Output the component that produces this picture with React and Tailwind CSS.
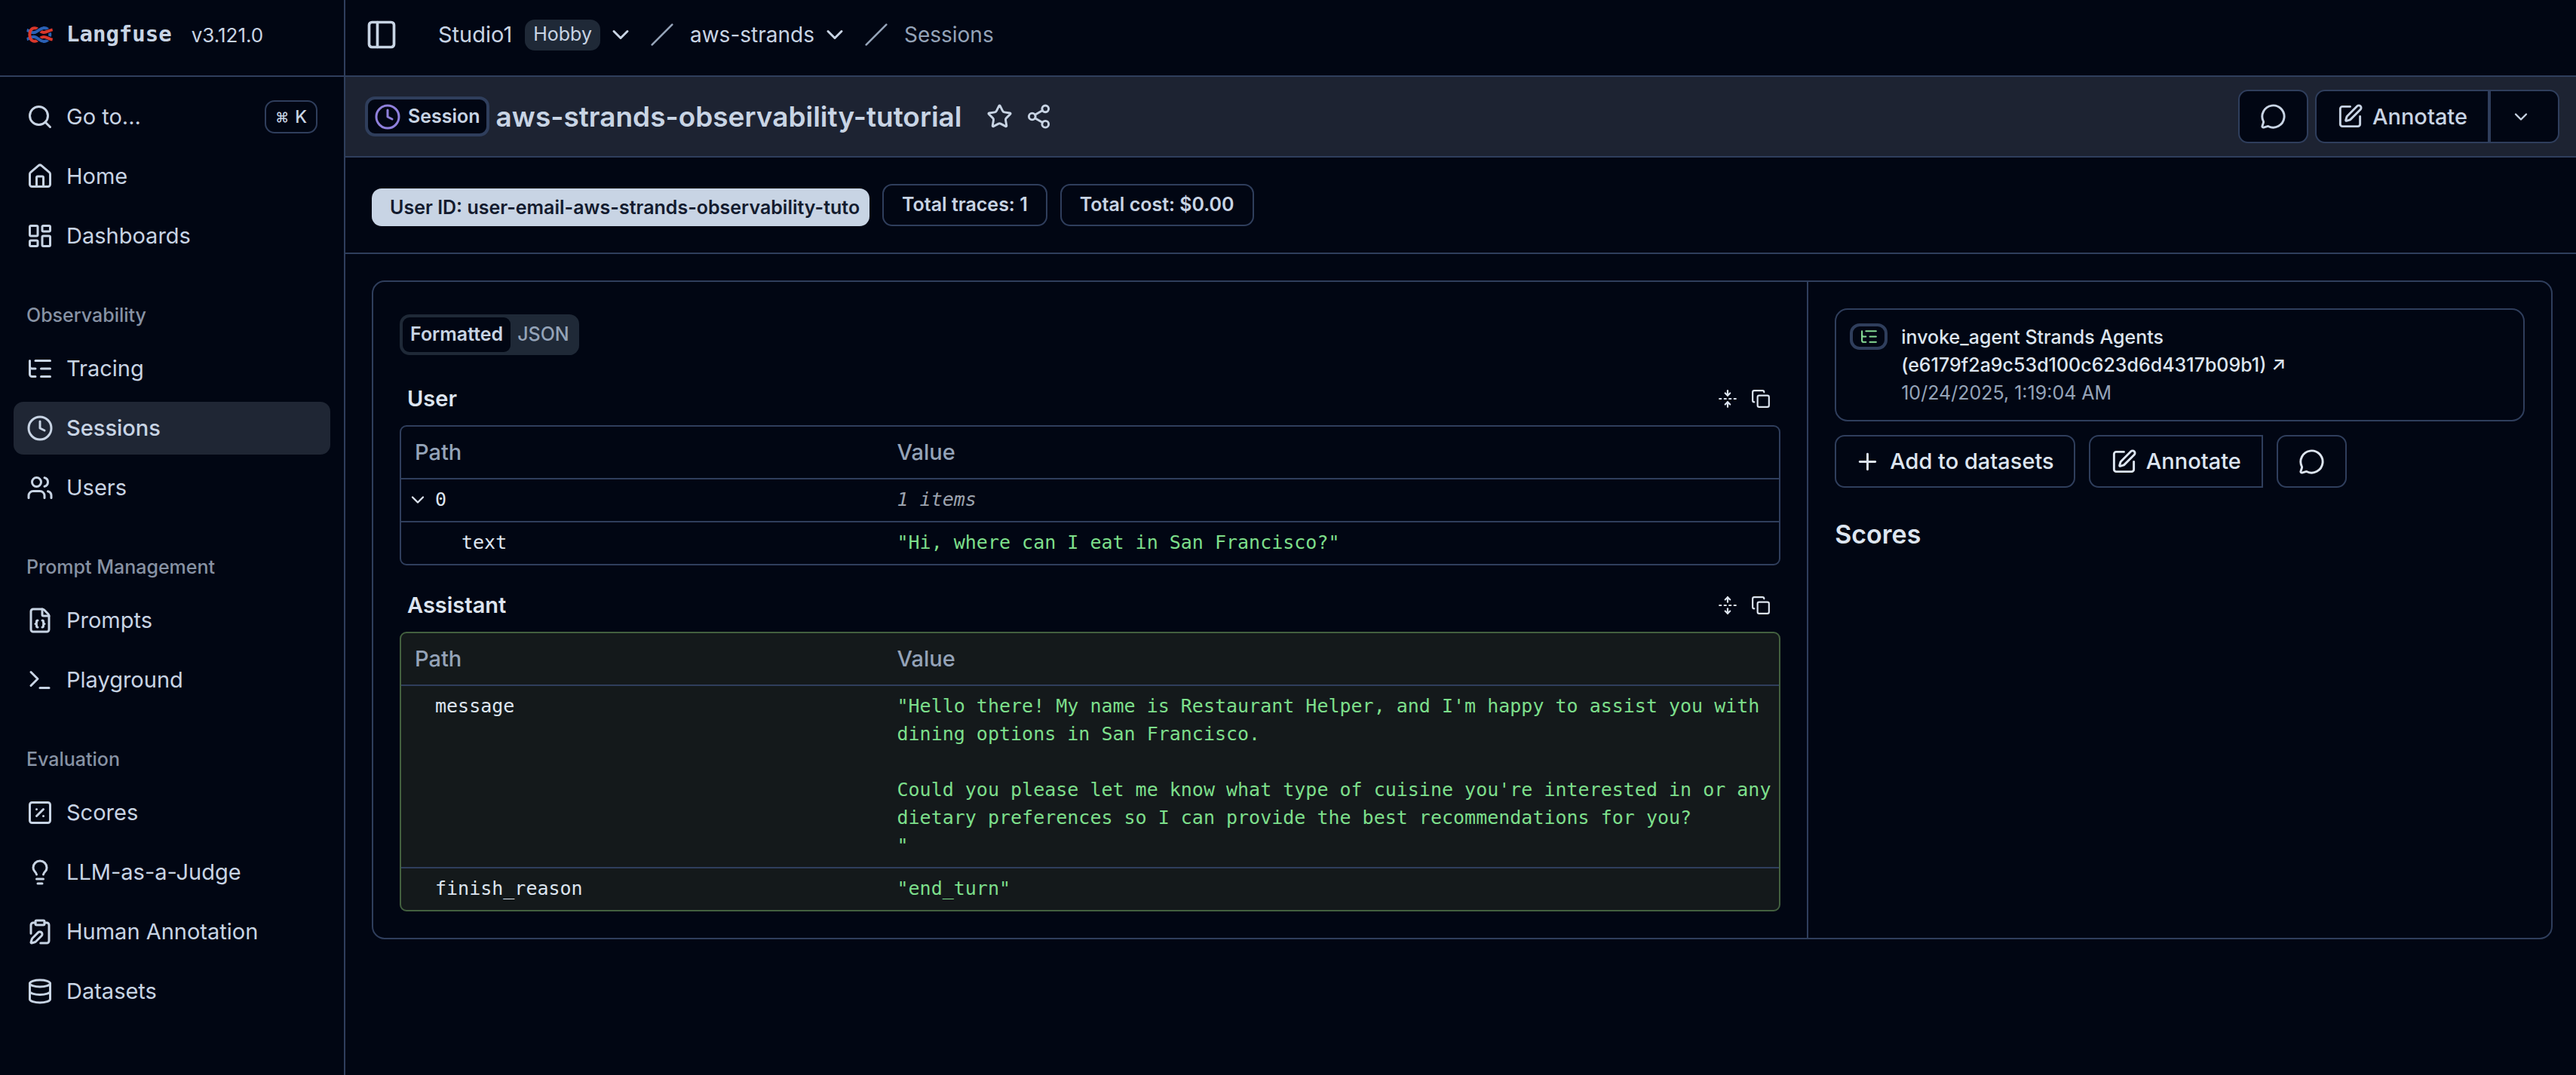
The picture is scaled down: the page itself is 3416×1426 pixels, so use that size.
import {
  Search, House, LayoutDashboard, ListTree, Clock, Users, FileBraces, Terminal, SquarePercent,
  Lightbulb, ClipboardPen, Database, PanelLeft, ChevronDown, Slash, Star, Share2, MessageCircle,
  SquarePen, Plus, FoldVertical, UnfoldVertical, Copy,
} from "lucide-react";

const groups = [
  { items: [[Search, "Go to..."], [House, "Home"], [LayoutDashboard, "Dashboards"]] },
  { label: "Observability", items: [[ListTree, "Tracing"], [Clock, "Sessions"], [Users, "Users"]] },
  { label: "Prompt Management", items: [[FileBraces, "Prompts"], [Terminal, "Playground"]] },
  {
    label: "Evaluation",
    items: [[SquarePercent, "Scores"], [Lightbulb, "LLM-as-a-Judge"], [ClipboardPen, "Human Annotation"], [Database, "Datasets"]],
  },
];

function Logo() {
  return (
    <svg viewBox="15 44 105 72" className="h-6 w-[35px]" fill="none" strokeWidth="12" aria-hidden="true">
      <path stroke="#2a61b5" d="M17 62C28 64 32 72 44 72C64 70 66 53 84 53C100 53 109 66 109 80C109 94 100 107 84 107C66 107 64 90 44 88C32 88 28 96 17 98" />
      <path stroke="#010613" strokeWidth="17" d="M114 62C100 66 95 71 84 71M114 98C100 94 95 89 84 89" />
      <path stroke="#d9372b" d="M119 60C102 64 96 71 84 71C70 71 62 54 48 54C34 54 28 66 28 80C28 94 34 106 48 106C62 106 70 89 84 89C96 89 102 96 119 100" />
      <path stroke="#010613" strokeWidth="17" d="M52 70C64 66 69 54 82 53M52 90C64 94 69 106 82 107" />
      <path stroke="#2a61b5" d="M44 72C64 70 66 53 86 53M44 88C64 90 66 107 86 107" />
    </svg>
  );
}

function Sidebar() {
  return (
    <aside className="flex w-[458px] shrink-0 flex-col border-r-2 border-[#2f3e5c]">
      <div className="flex h-[102px] items-center border-b-2 border-[#2f3e5c] pb-2 pl-[35px]">
        <Logo />
        <span className="ml-[18px] text-[29px] font-bold [font-family:'DejaVu_Sans_Mono',monospace]">Langfuse</span>
        <span className="ml-[26px] text-[26px]">v3.121.0</span>
      </div>
      <nav>
        {groups.map((group, i) => (
          <div key={i} className="p-[18px]">
            {group.label && (
              <h2 className="flex h-[70px] items-center px-[17px] text-[25px] font-medium text-[#8792a4]">{group.label}</h2>
            )}
            <ul className="flex flex-col gap-[9px]">
              {group.items.map(([Icon, name]) => (
                <li key={name}>
                  <a
                    href="#"
                    className={
                      name === "Sessions"
                        ? "flex h-[70px] items-center gap-[17px] rounded-[13px] bg-[#1f2634] px-[17px] text-[29px] font-medium"
                        : "flex h-[70px] items-center gap-[17px] rounded-[13px] px-[17px] text-[29px]"
                    }
                  >
                    <Icon size={36} />
                    <span>{name}</span>
                    {name === "Go to..." && (
                      <kbd className="ml-auto flex h-11 items-center gap-2 rounded-[13px] border-2 border-[#2f3e5c] px-3 text-[23px] font-medium [font-family:Inter,'DejaVu_Sans',sans-serif]">
                        <span className="text-[18px]">⌘</span>K
                      </kbd>
                    )}
                  </a>
                </li>
              ))}
            </ul>
          </div>
        ))}
      </nav>
    </aside>
  );
}

function Breadcrumbs() {
  return (
    <header className="flex h-[102px] items-center border-b-2 border-[#2f3e5c] pb-2 pl-[26px] text-[29px]">
      <button aria-label="Toggle sidebar"><PanelLeft size={44} /></button>
      <nav aria-label="Breadcrumb" className="ml-[53px] flex items-center">
        <button className="flex items-center">
          Studio1
          <span className="ml-[17px] flex h-[41px] items-center rounded-[13px] bg-[#1f2937] px-[11px] text-[25px]">Hobby</span>
          <ChevronDown size={36} className="ml-[9px]" />
        </button>
        <Slash size={32} className="mx-[21px] text-[#94a3b8]" />
        <button className="flex items-center text-[28px]">
          aws-strands
          <ChevronDown size={36} className="ml-[9px]" />
        </button>
        <Slash size={32} className="mx-[21px] text-[#94a3b8]" />
        <a href="#" className="text-[28px] text-[#94a3b8]">Sessions</a>
      </nav>
    </header>
  );
}

const outline = "flex h-[71px] items-center border-2 border-[#2f3e5c] bg-[#010613] text-[29px] font-medium";

function TitleBar() {
  return (
    <div className="flex h-[107px] items-center border-b-2 border-[#2f3e5c] bg-[#1d2332] pr-[22px] pl-[26px]">
      <span className="flex h-[53px] items-center gap-[9px] rounded-[13px] border-4 border-[#2f3e5c] bg-[#010613] px-2 text-[25px] font-semibold">
        <Clock size={36} className="text-[#8f80dc]" />
        Session
      </span>
      <h1 className="ml-[9px] text-[37px] font-semibold">aws-strands-observability-tutorial</h1>
      <button aria-label="Bookmark" className="ml-8"><Star size={35} /></button>
      <button aria-label="Share" className="ml-[17px]"><Share2 size={35} /></button>
      <div className="ml-auto flex">
        <button aria-label="Comments" className={outline + " mr-[9px] rounded-[13px] px-[27px]"}><MessageCircle size={35} /></button>
        <button className={outline + " gap-3 rounded-l-[13px] px-[27px]"}><SquarePen size={35} />Annotate</button>
        <button aria-label="More annotation options" className={outline + " rounded-r-[13px] pr-[35px] pl-[26px]"}><ChevronDown size={28} /></button>
      </div>
    </div>
  );
}

function Badges() {
  return (
    <div className="flex items-end gap-[17px] border-b-2 border-[#2f3e5c] px-[35px] py-[35px] text-[25px] font-semibold">
      <a href="#" className="h-[50px] w-[660px] rounded-[13px] bg-[#c8d4e4] pl-6 leading-[50px] whitespace-nowrap text-[#131b2e]">
        User ID: user-email-aws-strands-observability-tuto
      </a>
      <span className="flex h-14 items-center rounded-[13px] border-2 border-[#2f3e5c] px-6">Total traces: 1</span>
      <span className="flex h-14 items-center rounded-[13px] border-2 border-[#2f3e5c] px-6">Total cost: $0.00</span>
    </div>
  );
}

function Message({ role, expanded, green, rows }) {
  return (
    <section>
      <div className="flex h-[70px] items-center px-[10px]">
        <h3 className="text-[29px] font-semibold text-[#dde5f0]">{role}</h3>
        <div className="ml-auto flex gap-[18px] pr-[3px] text-[#dde5f0]">
          <button aria-label={expanded ? "Collapse all" : "Expand all"}>
            {expanded ? <FoldVertical size={26} /> : <UnfoldVertical size={26} />}
          </button>
          <button aria-label="Copy"><Copy size={26} /></button>
        </div>
      </div>
      <div className={green ? "overflow-hidden rounded-[9px] border-2 border-[#43603f] bg-[#14191b]" : "overflow-hidden rounded-[9px] border-2 border-[#2f3e5c]"}>
        <table className="w-full table-fixed text-left">
          <thead>
            <tr className="border-b-2 border-[#2f3e5c] text-[29px] text-[#94a3b8]">
              <th className="h-[69px] w-[35%] px-[18px] font-medium">Path</th>
              <th className="px-[18px] font-medium">Value</th>
            </tr>
          </thead>
          <tbody className="align-top text-[25px] leading-[37px] [font-family:'DejaVu_Sans_Mono',monospace]">
            {rows.map((r) => (
              <tr key={r.path} className="border-b-2 border-[#2f3e5c] last:border-b-0">
                <td className="pt-2 pb-[10px] text-[#dde5f0]">
                  {r.kind === "parent" ? (
                    <button className="flex items-center gap-[9px] pl-[8px]"><ChevronDown size={28} />{r.path}</button>
                  ) : (
                    <span className={r.kind === "child" ? "pl-20" : "pl-[45px]"}>{r.path}</span>
                  )}
                </td>
                <td className={r.kind === "parent" ? "pt-2 pr-1 pb-[10px] pl-[18px] text-[#9ca3af] italic" : "pt-2 pr-1 pb-[10px] pl-[18px] whitespace-pre-line text-[#7ddf8b]"}>{r.value}</td>
              </tr>
            ))}
          </tbody>
        </table>
      </div>
    </section>
  );
}

const reply = `"Hello there! My name is Restaurant Helper, and I'm happy to assist you with dining options in San Francisco.

Could you please let me know what type of cuisine you're interested in or any dietary preferences so I can provide the best recommendations for you?
"`;

function TracePanel() {
  const btn = "flex h-[70px] items-center border-2 border-[#2f3e5c] text-[29px] font-medium";
  return (
    <div className="flex-1 p-[35px] text-[#dde5f0]">
      <a href="#" className="flex h-[150px] items-start gap-[18px] rounded-[17px] border-2 border-[#2f3e5c] px-[18px] pt-[18px]">
        <span className="flex h-[35px] w-[50px] items-center justify-center rounded-[13px] border-4 border-[#2f3e5c] text-[#86dc95]">
          <ListTree size={25} />
        </span>
        <span className="text-[25px] leading-[37px]">
          <span className="block font-medium">invoke_agent Strands Agents</span>
          <span className="block font-medium">(e6179f2a9c53d100c623d6d4317b09b1) ↗</span>
          <span className="block text-[#94a3b8]">10/24/2025, 1:19:04 AM</span>
        </span>
      </a>
      <div className="mt-[18px] flex gap-[18px]">
        <button className={btn + " gap-3 rounded-[13px] pr-[26px] pl-6"}><Plus size={35} />Add to datasets</button>
        <button className={btn + " gap-3 rounded-l-[13px] px-[27px]"}><SquarePen size={35} />Annotate</button>
        <button aria-label="Comments" className={btn + " rounded-[13px] px-[27px]"}><MessageCircle size={35} /></button>
      </div>
      <h2 className="mt-[35px] text-[34px] leading-[54px] font-semibold">Scores</h2>
    </div>
  );
}

export default function App() {
  return (
    <div className="flex min-h-screen bg-[#010613] text-[#c8d4e4] [font-family:Inter,sans-serif]">
      <Sidebar />
      <div className="flex min-w-0 flex-1 flex-col">
        <Breadcrumbs />
        <TitleBar />
        <Badges />
        <main className="pt-[35px] pr-[31px] pl-[35px]">
          <div className="flex rounded-[17px] border-2 border-[#2f3e5c]">
            <div className="w-[65.9%] border-r-2 border-[#2f3e5c] px-[35px] pt-[43px] pb-[35px]">
              <div role="tablist" className="flex h-[54px] w-fit rounded-[13px] bg-[#1f2937] p-1 text-[25px] font-semibold">
                <button role="tab" aria-selected="true" className="rounded-[9px] bg-[#010613] px-[10px]">Formatted</button>
                <button role="tab" aria-selected="false" className="px-[9px] font-medium text-[#94a3b8]">JSON</button>
              </div>
              <div className="mt-[23px] flex flex-col gap-[18px]">
                <Message
                  role="User"
                  expanded
                  rows={[
                    { path: "0", kind: "parent", value: "1 items" },
                    { path: "text", kind: "child", value: '"Hi, where can I eat in San Francisco?"' },
                  ]}
                />
                <Message
                  role="Assistant"
                  green
                  rows={[
                    { path: "message", value: reply },
                    { path: "finish_reason", value: '"end_turn"' },
                  ]}
                />
              </div>
            </div>
            <TracePanel />
          </div>
        </main>
      </div>
    </div>
  );
}
